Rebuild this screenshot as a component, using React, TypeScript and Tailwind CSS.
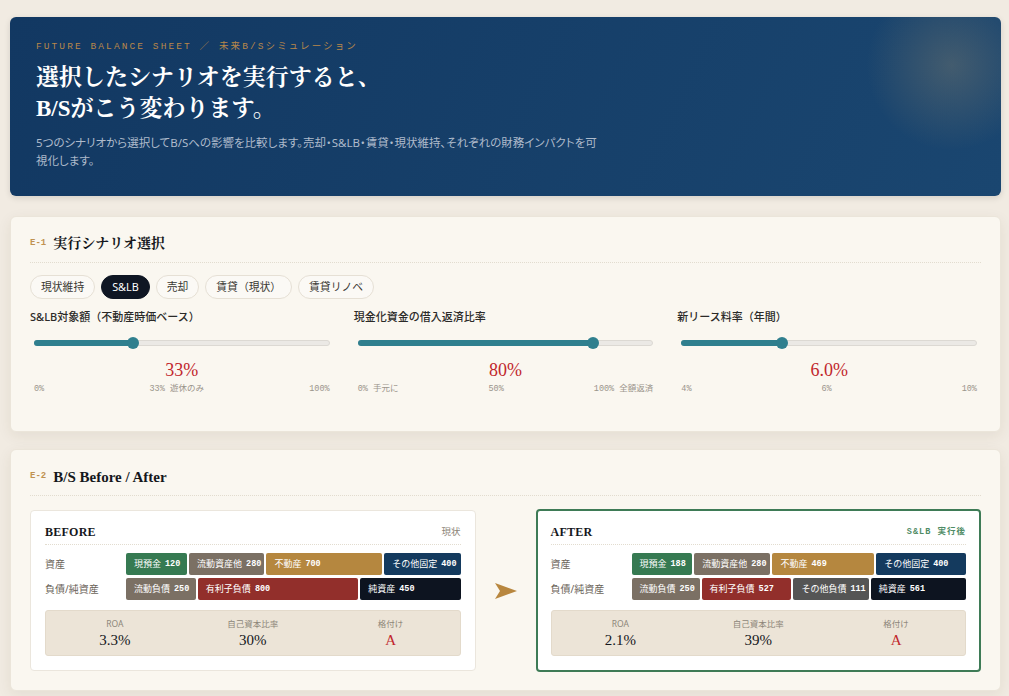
import React from "react";

const serif = "font-['Liberation_Serif','Noto_Serif_CJK_JP','Noto_Sans_CJK_JP',serif]";
const sans = "font-['Noto_Sans','Noto_Sans_CJK_JP',sans-serif]";
const mono = "font-['Liberation_Mono','DejaVu_Sans_Mono','Noto_Sans_CJK_JP',monospace]";

type Seg = { label: string; value: number; w: number; color: string };

const tabs = ["現状維持", "S&LB", "売却", "賃貸（現状）", "賃貸リノベ"];

const sliders = [
  { label: "S&LB対象額（不動産時価ベース）", pct: 33.5, value: "33%", ticks: ["0%", "33% 遊休のみ", "100%"] },
  { label: "現金化資金の借入返済比率", pct: 79.5, value: "80%", ticks: ["0% 手元に", "50%", "100% 全額返済"] },
  { label: "新リース料率（年間）", pct: 34, value: "6.0%", ticks: ["4%", "6%", "10%"] },
];

const before: { assets: Seg[]; liab: Seg[]; kpi: [string, string][] } = {
  assets: [
    { label: "現預金", value: 120, w: 59, color: "bg-[#367a52]" },
    { label: "流動資産他", value: 280, w: 75, color: "bg-[#7b7064]" },
    { label: "不動産", value: 700, w: 120, color: "bg-[#b5873f]" },
    { label: "その他固定", value: 400, w: 76, color: "bg-[#143a5e]" },
  ],
  liab: [
    { label: "流動負債", value: 250, w: 67, color: "bg-[#7b7064]" },
    { label: "有利子負債", value: 800, w: 165, color: "bg-[#922f2b]" },
    { label: "純資産", value: 450, w: 100, color: "bg-[#0d1420]" },
  ],
  kpi: [
    ["ROA", "3.3%"],
    ["自己資本比率", "30%"],
    ["格付け", "A"],
  ],
};

const after: typeof before = {
  assets: [
    { label: "現預金", value: 188, w: 58, color: "bg-[#367a52]" },
    { label: "流動資産他", value: 280, w: 75, color: "bg-[#7b7064]" },
    { label: "不動産", value: 469, w: 103, color: "bg-[#b5873f]" },
    { label: "その他固定", value: 400, w: 90, color: "bg-[#143a5e]" },
  ],
  liab: [
    { label: "流動負債", value: 250, w: 66, color: "bg-[#7b7064]" },
    { label: "有利子負債", value: 527, w: 90, color: "bg-[#922f2b]" },
    { label: "その他負債", value: 111, w: 74, color: "bg-[#555555]" },
    { label: "純資産", value: 561, w: 96, color: "bg-[#0d1420]" },
  ],
  kpi: [
    ["ROA", "2.1%"],
    ["自己資本比率", "39%"],
    ["格付け", "A"],
  ],
};

function SectionHead({ code, title }: { code: string; title: string }) {
  return (
    <div className="box-content flex h-5 items-center gap-[7px] border-b border-dotted border-[#e2dccf] pb-2">
      <span className={`${mono} text-[9px] font-bold text-[#c09250]`}>{code}</span>
      <h2 className={`${serif} font-bold leading-5 text-[#15171c] ${code === "E-1" ? "text-[14px]" : "text-[15px]"}`}>
        {title}
      </h2>
    </div>
  );
}

function Slider({ s }: { s: (typeof sliders)[number] }) {
  return (
    <div className="flex flex-col">
      <div className={`${sans} text-[11px] font-medium leading-[14px] text-[#2b2a28]`}>{s.label}</div>
      <div className="relative mx-1 mt-[13px] h-3">
        <div className="absolute inset-x-0 top-[3px] h-[6px] rounded-full border border-[#dcd9d3] bg-[#ebe9e5]" />
        <div className="absolute left-0 top-[3px] h-[6px] rounded-full bg-[#2f7f8e]" style={{ width: `${s.pct}%` }} />
        <div className="absolute top-0 -ml-[6px] h-3 w-3 rounded-full bg-[#2f7f8e]" style={{ left: `${s.pct}%` }} />
      </div>
      <div className={`${serif} mt-[10px] text-center text-[18px] leading-[22px] text-[#c1272d]`}>{s.value}</div>
      <div className={`${mono} mt-[2px] flex justify-between px-1 text-[8.5px] leading-3 text-[#9b958c]`}>
        {s.ticks.map((t) => (
          <span key={t}>{t}</span>
        ))}
      </div>
    </div>
  );
}

function Bar({ segs }: { segs: Seg[] }) {
  return (
    <div className="flex flex-1 gap-[2px]">
      {segs.map((g) => (
        <div
          key={g.label}
          className={`${g.color} flex h-[22px] basis-0 items-center gap-[4px] overflow-hidden whitespace-nowrap rounded-[2px] pl-2 text-white`}
          style={{ flexGrow: g.w }}
        >
          <span className={`${sans} text-[9px]`}>{g.label}</span>
          <span className={`${mono} text-[8.5px] font-bold`}>{g.value}</span>
        </div>
      ))}
    </div>
  );
}

function Panel({
  title,
  tag,
  data,
  active,
}: {
  title: string;
  tag: string;
  data: typeof before;
  active?: boolean;
}) {
  return (
    <div
      className={`rounded-[4px] bg-white pt-[13px] pb-[14px] ${
        active ? "border-2 border-[#3e7b56] px-[13px]" : "border border-[#ebe6dd] px-[14px]"
      }`}
    >
      <div className="flex items-center justify-between border-b border-dotted border-[#e2dccf] pb-1">
        <span className={`${serif} text-[12px] font-bold leading-4 tracking-[0.02em] text-[#15171c]`}>{title}</span>
        <span
          className={
            active
              ? `${mono} text-[8.5px] font-bold tracking-[0.12em] text-[#4f8c66]`
              : `${sans} text-[9.5px] text-[#8c8579]`
          }
        >
          {tag}
        </span>
      </div>
      <div className="mt-2 flex flex-col gap-[3px]">
        <div className="flex items-center">
          <span className={`${sans} w-[81px] text-[10px] text-[#6b645a]`}>資産</span>
          <Bar segs={data.assets} />
        </div>
        <div className="flex items-center">
          <span className={`${sans} w-[81px] text-[10px] text-[#6b645a]`}>負債/純資産</span>
          <Bar segs={data.liab} />
        </div>
      </div>
      <div className="mt-[10px] grid grid-cols-3 rounded-[3px] border border-[#e3dacb] bg-[#ece4d7] pt-[7px] pb-[5px]">
        {data.kpi.map(([k, v]) => (
          <div key={k} className="flex flex-col items-center">
            <span className={`${sans} text-[8.5px] leading-3 text-[#8d8679]`}>{k}</span>
            <span className={`${serif} text-[15px] leading-5 ${v === "A" ? "text-[#c1272d]" : "text-[#15171c]"}`}>
              {v}
            </span>
          </div>
        ))}
      </div>
    </div>
  );
}

export default function App() {
  return (
    <main className="min-h-screen bg-[#f1ebe2] pl-[10px] pr-[8px] pt-[17px] pb-6">
      {/* Hero */}
      <section className="rounded-[6px] bg-[radial-gradient(circle_at_95%_27%,rgba(190,160,110,0.25),transparent_85px),linear-gradient(115deg,#123862,#1a4670)] px-[26px] pt-[23px] pb-[27px] shadow-[0_2px_6px_rgba(0,0,0,0.12)]">
        <div className={`${mono} text-[9.5px] leading-[14px] tracking-[0.22em] text-[#b8874a]`}>
          FUTURE BALANCE SHEET ／ 未来B/Sシミュレーション
        </div>
        <h1 className={`${serif} mt-2 text-[23px] font-bold leading-[31px] text-white`}>
          選択したシナリオを実行すると、
          <br />
          B/Sがこう変わります。
        </h1>
        <p className={`${sans} mt-[10px] max-w-[565px] text-[11.5px] leading-[17.5px] text-[#aebacb] [font-feature-settings:'palt']`}>
          5つのシナリオから選択してB/Sへの影響を比較します。売却・S&LB・賃貸・現状維持、それぞれの財務インパクトを可視化します。
        </p>
      </section>

      {/* E-1 scenario selector */}
      <section className="mt-5 rounded-[6px] border border-[#ebe5da] bg-[#faf7f0] px-[19px] pt-[17px] pb-[36px] shadow-[0_4px_14px_rgba(80,60,30,0.08)]">
        <SectionHead code="E-1" title="実行シナリオ選択" />
        <div className="mt-3 flex gap-[6px]">
          {tabs.map((t) => (
            <button
              key={t}
              className={`${sans} h-6 rounded-full border px-[10px] text-[10.8px] ${
                t === "S&LB"
                  ? "border-[#0f1623] bg-[#0f1623] text-white"
                  : "border-[#e6e0d5] bg-[#fbf9f5] text-[#3a3833]"
              }`}
            >
              {t}
            </button>
          ))}
        </div>
        <div className="mt-[11px] grid grid-cols-3 gap-5">
          {sliders.map((s) => (
            <Slider key={s.label} s={s} />
          ))}
        </div>
      </section>

      {/* E-2 before / after */}
      <section className="mt-[17px] rounded-[6px] border border-[#ebe5da] bg-[#faf7f0] px-[19px] pt-[17px] pb-[18px] shadow-[0_4px_14px_rgba(80,60,30,0.08)]">
        <SectionHead code="E-2" title="B/S Before / After" />
        <div className="mt-[13px] grid grid-cols-[1fr_60px_1fr] items-center">
          <Panel title="BEFORE" tag="現状" data={before} />
          <div className="flex justify-center">
            <svg width="22" height="16" viewBox="0 0 22 16">
              <path d="M0 0 L22 8 L0 16 L5 8 Z" fill="#b8873f" />
            </svg>
          </div>
          <Panel title="AFTER" tag="S&LB 実行後" data={after} active />
        </div>
      </section>
    </main>
  );
}
